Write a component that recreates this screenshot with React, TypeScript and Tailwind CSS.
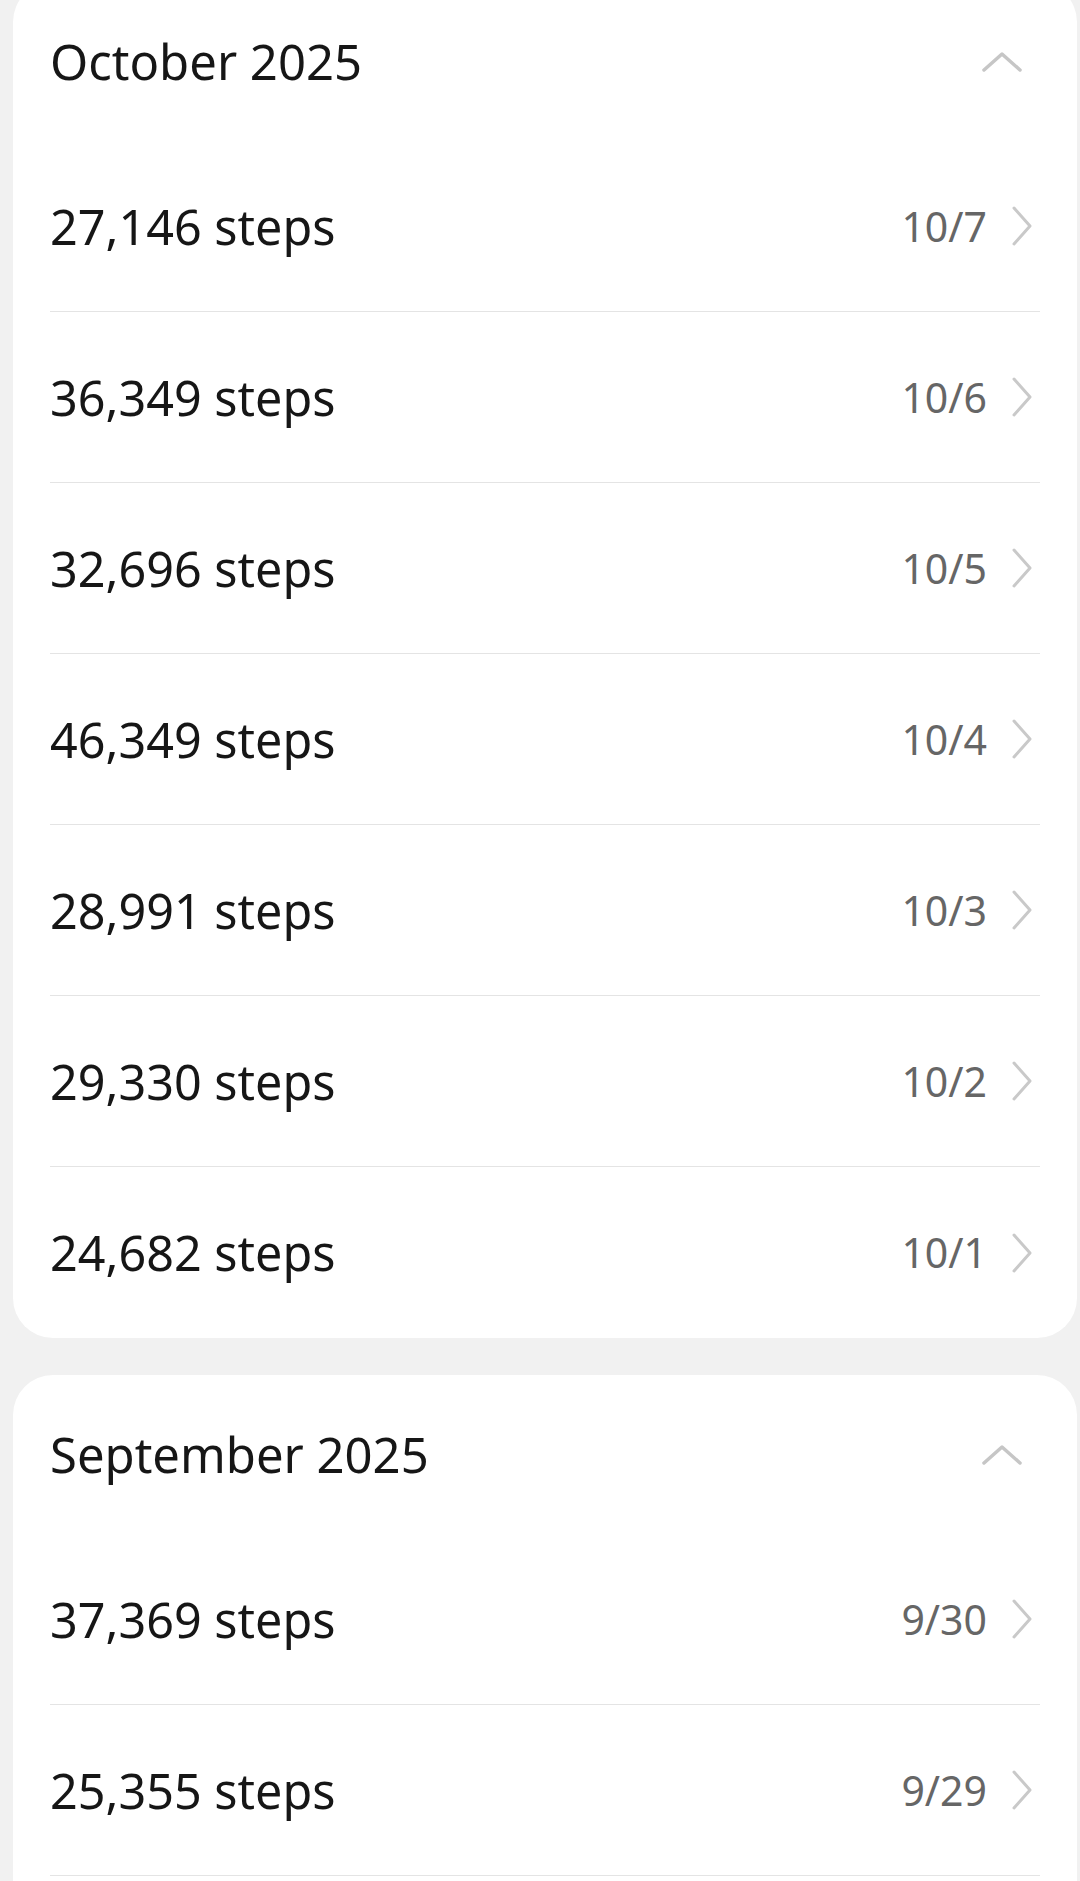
const months = [
  {
    title: "October 2025",
    rows: [
      { steps: "27,146", date: "10/7" },
      { steps: "36,349", date: "10/6" },
      { steps: "32,696", date: "10/5" },
      { steps: "46,349", date: "10/4" },
      { steps: "28,991", date: "10/3" },
      { steps: "29,330", date: "10/2" },
      { steps: "24,682", date: "10/1" },
    ],
    last: true,
  },
  {
    title: "September 2025",
    rows: [
      { steps: "37,369", date: "9/30" },
      { steps: "25,355", date: "9/29" },
    ],
    last: false,
  },
];

const ChevronUp = () => (
  <svg width="40" height="22" viewBox="0 0 40 22" fill="none">
    <path d="M2 19 L20 3 L38 19" stroke="#c6c6c6" strokeWidth="3.5" strokeLinecap="round" strokeLinejoin="round" />
  </svg>
);

const ChevronRight = () => (
  <svg width="22" height="42" viewBox="0 0 22 42" fill="none">
    <path d="M3 3 L19 21 L3 39" stroke="#c9c9c9" strokeWidth="3" strokeLinecap="round" strokeLinejoin="round" />
  </svg>
);

export default function App() {
  return (
    <div className="h-screen bg-[#f1f1f1] pl-[13px] pr-[3px] overflow-hidden font-['Noto_Sans',sans-serif]">
      <div className="flex flex-col gap-[37px] -mt-[18px]">
        {months.map((m) => (
          <section key={m.title} className={m.last ? "bg-white rounded-[40px]" : "bg-white rounded-[40px] pb-[60px]"}>
            <header className="h-[159px] flex items-center justify-between pl-[37px] pr-[55px]">
              <h2 className="text-[49px] leading-none text-[#161616]">{m.title}</h2>
              <ChevronUp />
            </header>
            <div className="mx-[37px]">
              {m.rows.map((r, i) => (
                <div
                  key={r.date}
                  className={
                    m.last && i === m.rows.length - 1
                      ? "h-[171px] flex items-center justify-between"
                      : "h-[171px] flex items-center justify-between border-b border-[#e4e4e4]"
                  }
                >
                  <span className="text-[48.5px] leading-none text-[#161616]">{r.steps} steps</span>
                  <div className="flex items-center gap-[24px] pr-[7px]">
                    <span className="text-[41px] leading-none text-[#666666]">{r.date}</span>
                    <ChevronRight />
                  </div>
                </div>
              ))}
            </div>
          </section>
        ))}
      </div>
    </div>
  );
}
